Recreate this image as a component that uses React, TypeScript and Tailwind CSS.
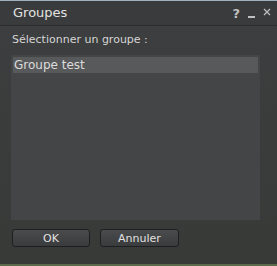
import * as React from "react";

export default function App() {
  return (
    <div className="w-[277px] h-[266px] bg-[#3b3d3d] flex flex-col font-['DejaVu_Sans',sans-serif] text-[#d8d8d8] border-t border-[#9fb0bb] border-b-2 border-b-[#5a6a4a] overflow-hidden">
      <div className="h-[25px] shrink-0 flex items-center pl-[13px] pr-[6px] bg-[#3a3b3c] border-b border-[#2c2d2e]">
        <span className="text-[13px] text-[#e2e2e2]">Groupes</span>
        <div className="ml-auto flex items-center gap-[8px] text-[#c0c0c0]">
          <span className="text-[13px] font-bold leading-none">?</span>
          <span className="w-[7px] h-[2px] bg-[#c0c0c0] mt-[7px]"></span>
          <svg width="8" height="8" viewBox="0 0 8 8" className="mb-[3px]">
            <path d="M1 1L7 7M7 1L1 7" stroke="#c0c0c0" strokeWidth="1.2" />
          </svg>
        </div>
      </div>
      <div className="flex-1 flex flex-col px-[11px] pt-[7px] bg-gradient-to-b from-[#3c3e3f] to-[#383a38]">
        <div className="text-[11px] leading-[14px] pl-[1px] text-[#d5d5d5]">
          Sélectionner un groupe :
        </div>
        <div className="mt-[8px] w-[249px] h-[165px] bg-[#444546] p-[2px]">
          <div className="h-[16px] bg-[#58595a] pl-[1px] text-[12px] leading-[16px] text-[#dcdcdc]">
            Groupe test
          </div>
        </div>
        <div className="mt-[9px] flex gap-[10px] pl-[1px]">
          <button className="w-[78px] h-[18px] rounded-[3px] border border-[#1e1f20] bg-gradient-to-b from-[#4a4b4c] to-[#3a3b3c] text-[11px] leading-none text-[#e0e0e0]">
            OK
          </button>
          <button className="w-[79px] h-[18px] rounded-[3px] border border-[#1e1f20] bg-gradient-to-b from-[#4a4b4c] to-[#3a3b3c] text-[11px] leading-none text-[#e0e0e0]">
            Annuler
          </button>
        </div>
      </div>
    </div>
  );
}
